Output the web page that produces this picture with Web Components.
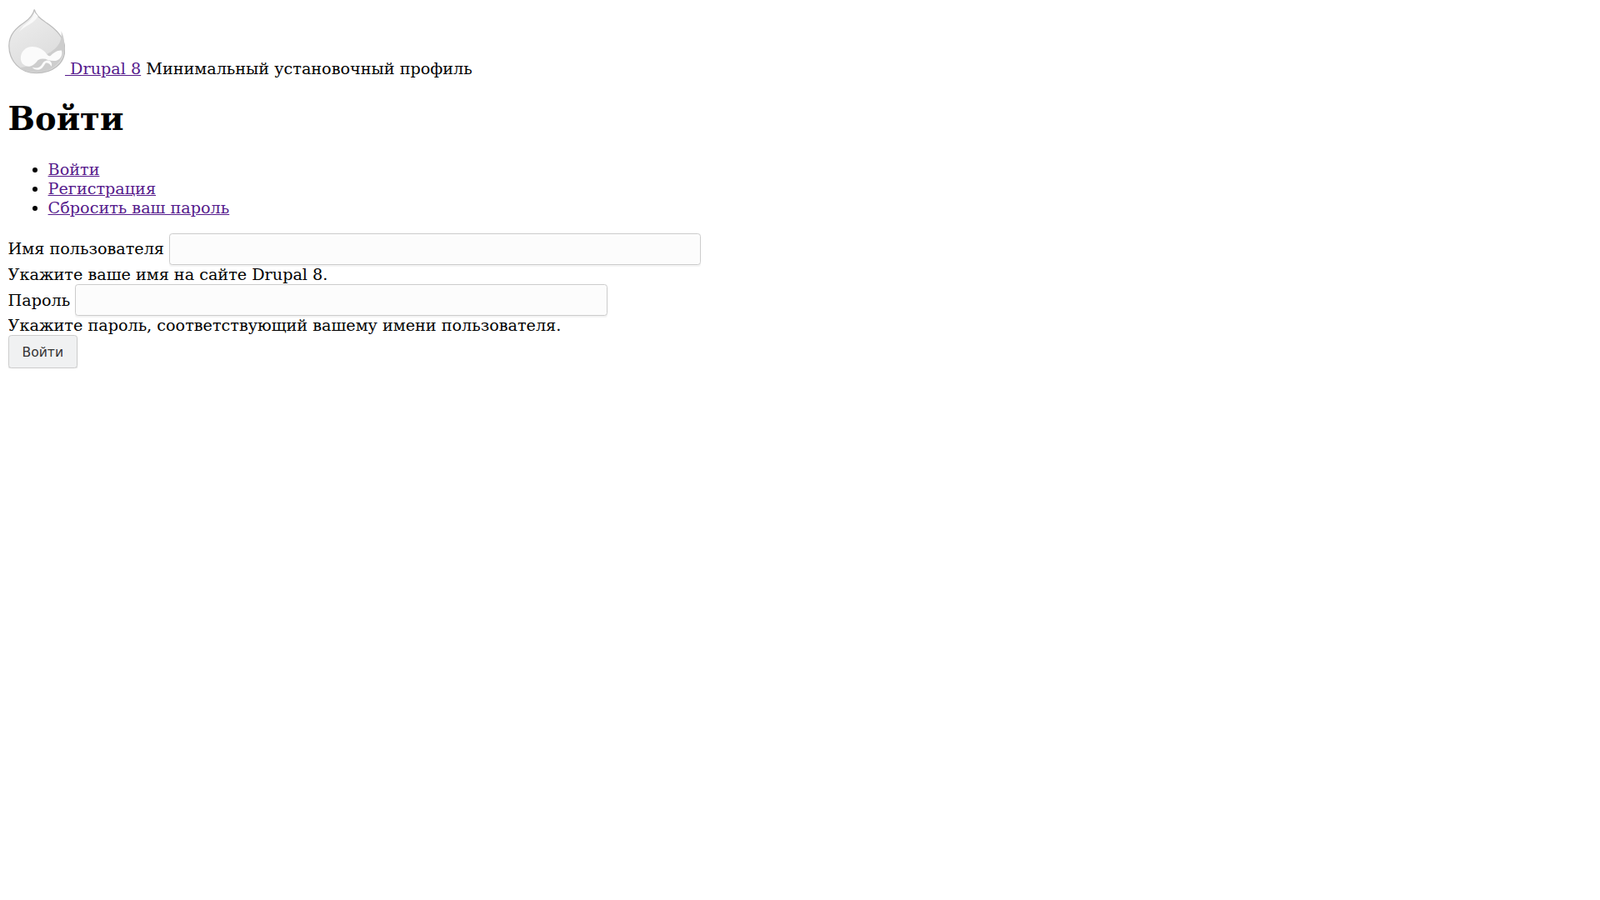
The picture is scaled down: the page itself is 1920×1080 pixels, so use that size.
<!DOCTYPE html>
<html lang="ru">
<head>
<meta charset="utf-8">
<title>Войти | Drupal 8</title>
<style>
  html { zoom: 1.2; }
  body { font-family: "DejaVu Serif", serif; font-size: 16px; color: #000; background: #fff; }
</style>
</head>
<body>

<site-header name="Drupal 8" slogan="Минимальный установочный профиль"></site-header>
<page-title>Войти</page-title>
<user-tabs>
  <a href="#a">Войти</a>
  <a href="#b">Регистрация</a>
  <a href="#c">Сбросить ваш пароль</a>
</user-tabs>
<login-form>
  <form-field label="Имя пользователя" help="Укажите ваше имя на сайте Drupal 8."></form-field>
  <form-field label="Пароль" help="Укажите пароль, соответствующий вашему имени пользователя."></form-field>
  <form-button>Войти</form-button>
</login-form>

<script>
const LINK_COLOR = '#551a8b';

class SiteHeader extends HTMLElement {
  connectedCallback() {
    const root = this.attachShadow({mode: 'open'});
    root.innerHTML = `
      <style>
        :host { display: block; }
        a { color: ${LINK_COLOR}; }
      </style>
      <a href="#home"><svg width="57" height="66" viewBox="0 0 69 79">
        <defs>
          <linearGradient id="drop" x1="0.2" y1="0" x2="0.7" y2="1">
            <stop offset="0" stop-color="#eeeeee"/>
            <stop offset="1" stop-color="#dadada"/>
          </linearGradient>
        </defs>
        <path d="M31.5 1C33 8 39 12 46 17C58 25 68.5 35 68.5 49C68.5 67 53 78 34 78C14 78 .8 63 .8 45C.8 31 10 23 19 17C25 13 30 8 31.5 1Z" fill="url(#drop)" stroke="#bbb" stroke-width="1.2"/>
        <path d="M31.5 4C31 11 24 16 18 21C16 24 13 28 13 28C18 22 33 17 36 9Z" fill="#f9f9f9"/>
        <path d="M64 27C68 35 68.5 43 67.5 51C64 67 51 77 34 77C25 77 17 75 12 71C26 72 34 62 47 55C58 49 66 41 64 27Z" fill="#cdcdcd"/>
        <path d="M15 60C15 52 21 46 29 46C36 46 41 49 45 53C47 56 49 58 51 57C54 54 59 50 64.5 50.5C66 55 64 60 60 62C56 64 52 63 48 62C44 60 40 60 36 62C33 66 29 70 24 70C18 69 15 65 15 60Z" fill="#fbfbfb"/>
        <path d="M29 71C35 73 39 71 41 67C43 63 47 62 50 63C53 65 53 68 52 70C50 66 47 65 45 66C43 69 41 74 36 74C33 74 30 73 29 71Z" fill="#fbfbfb"/>
      </svg> Drupal 8</a> Минимальный установочный профиль
    `;
  }
}
customElements.define('site-header', SiteHeader);

class PageTitle extends HTMLElement {
  connectedCallback() {
    const root = this.attachShadow({mode: 'open'});
    root.innerHTML = `
      <style>
        :host { display: block; margin: 21.9px 0 22.4px; font-size: 32px; font-weight: bold; }
      </style>
      <slot></slot>
    `;
  }
}
customElements.define('page-title', PageTitle);

class UserTabs extends HTMLElement {
  connectedCallback() {
    const root = this.attachShadow({mode: 'open'});
    const items = [...this.querySelectorAll('a')]
      .map(a => `<li><a href="${a.getAttribute('href')}">${a.textContent}</a></li>`).join('');
    root.innerHTML = `
      <style>
        :host { display: block; }
        ul { margin: 16px 0 15.6px; padding-left: 40px; }
        a { color: ${LINK_COLOR}; }
      </style>
      <ul>${items}</ul>
    `;
  }
}
customElements.define('user-tabs', UserTabs);

class LoginForm extends HTMLElement {
  connectedCallback() {
    const root = this.attachShadow({mode: 'open'});
    root.innerHTML = `
      <style>:host { display: block; }</style>
      <slot></slot>
    `;
  }
}
customElements.define('login-form', LoginForm);

class FormField extends HTMLElement {
  connectedCallback() {
    const root = this.attachShadow({mode: 'open'});
    root.innerHTML = `
      <style>
        :host { display: block; }
        .row { display: flex; align-items: center; gap: 5.1px; }
        input {
          box-sizing: border-box; width: 532px; height: 32px; padding: 0 6px; margin: 0;
          font: 13.33px "DejaVu Sans", sans-serif;
          background: #fcfcfc; border: 1px solid #ccc; border-radius: 3px;
          box-shadow: 0 1px 1px rgba(0,0,0,.05);
        }
      </style>
      <div class="row"><label>${this.getAttribute('label')}</label><input type="text"></div>
      <div>${this.getAttribute('help')}</div>
    `;
  }
}
customElements.define('form-field', FormField);

class FormButton extends HTMLElement {
  connectedCallback() {
    const root = this.attachShadow({mode: 'open'});
    root.innerHTML = `
      <style>
        :host { display: block; }
        button {
          box-sizing: border-box; width: 69.5px; height: 32.7px; padding: 1px 0 0;
          font: 13px "DejaVu Sans", sans-serif; color: #333;
          background: #f0f1f2; border: 1px solid #ccc; border-radius: 3px;
          box-shadow: 0 1px 1px rgba(0,0,0,.1);
          display: block;
        }
      </style>
      <button><slot></slot></button>
    `;
  }
}
customElements.define('form-button', FormButton);
</script>
</body>
</html>
